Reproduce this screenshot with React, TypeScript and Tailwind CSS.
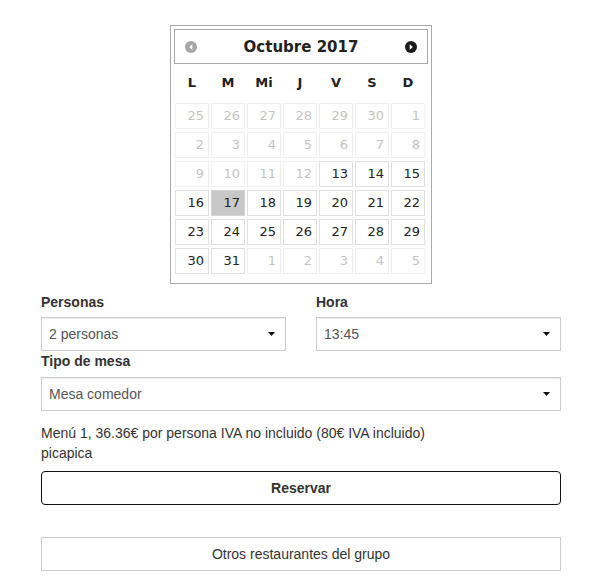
import React from "react";

type Day = { n: number; active: boolean; selected?: boolean };

const rows: Day[][] = (() => {
  const d = (n: number, active = false, selected = false): Day => ({ n, active, selected });
  return [
    [d(25), d(26), d(27), d(28), d(29), d(30), d(1)],
    [d(2), d(3), d(4), d(5), d(6), d(7), d(8)],
    [d(9), d(10), d(11), d(12), d(13, true), d(14, true), d(15, true)],
    [d(16, true), d(17, true, true), d(18, true), d(19, true), d(20, true), d(21, true), d(22, true)],
    [d(23, true), d(24, true), d(25, true), d(26, true), d(27, true), d(28, true), d(29, true)],
    [d(30, true), d(31, true), d(1), d(2), d(3), d(4), d(5)],
  ];
})();

const dayNames = ["L", "M", "Mi", "J", "V", "S", "D"];

function NavIcon({ dir, color }: { dir: "prev" | "next"; color: string }) {
  return (
    <svg width="12" height="12" viewBox="0 0 12 12">
      <circle cx="6" cy="6" r="6" fill={color} />
      {dir === "prev" ? (
        <path d="M7.3 3.2 L4.2 6 L7.3 8.8 Z" fill="#fff" />
      ) : (
        <path d="M4.7 3.2 L7.8 6 L4.7 8.8 Z" fill="#fff" />
      )}
    </svg>
  );
}

function SelectBox({ value }: { value: string }) {
  return (
    <div className="h-[34px] border border-[#ccc] bg-white shadow-[inset_0_1px_1px_rgba(0,0,0,0.075)] flex items-center justify-between pl-[7px] pr-[10px]">
      <span className="text-[14px] text-[#555]">{value}</span>
      <svg width="7" height="4" viewBox="0 0 7 4">
        <path d="M0 0 H7 L3.5 4 Z" fill="#111" />
      </svg>
    </div>
  );
}

export default function App() {
  return (
    <div className="w-[590px] h-[583px] bg-white overflow-hidden" style={{ fontFamily: '"Liberation Sans", Arial, sans-serif' }}>
      <div className="ml-[41px] w-[520px] pt-[25px]">
        {/* Calendar */}
        <div
          className="mx-auto w-[262px] border border-[#aaa] p-[3px] bg-white"
          style={{ fontFamily: '"DejaVu Sans", Verdana, sans-serif' }}
        >
          <div className="h-[35px] border border-[#aaa] flex items-center justify-between px-[10px] pt-[1px]">
            <NavIcon dir="prev" color="#a6a6a6" />
            <span className="text-[15px] font-bold text-[#222]">Octubre 2017</span>
            <NavIcon dir="next" color="#1a1a1a" />
          </div>
          <div className="grid grid-cols-[repeat(7,34px)] gap-x-[2px] pl-[1px] h-[37px] items-center">
            {dayNames.map((n) => (
              <div key={n} className="text-center text-[13px] font-bold text-[#222]">
                {n}
              </div>
            ))}
          </div>
          <div className="grid grid-cols-[repeat(7,34px)] gap-x-[2px] gap-y-[3px] pl-[1px] mt-[2px] mb-[6px]">
            {rows.flat().map((c, i) => (
              <div
                key={i}
                className={
                  "h-[26px] border flex items-center justify-end pr-[4px] text-[13px] " +
                  (c.selected
                    ? "bg-[#c8c8c8] border-[#d3d3d3] text-[#222]"
                    : c.active
                    ? "bg-white border-[#e0e0e0] text-[#222]"
                    : "bg-white border-[#f0f0f0] text-[#c4c4c4]")
                }
              >
                {c.n}
              </div>
            ))}
          </div>
        </div>

        {/* Form */}
        <div className="grid grid-cols-2 gap-x-[30px] mt-[8px]">
          <div>
            <label className="block text-[14px] leading-[20px] font-bold text-[#333] mb-[5px]">Personas</label>
            <SelectBox value="2 personas" />
          </div>
          <div>
            <label className="block text-[14px] leading-[20px] font-bold text-[#333] mb-[5px]">Hora</label>
            <SelectBox value="13:45" />
          </div>
        </div>
        <label className="block text-[14px] leading-[20px] font-bold text-[#333] mb-[6px]">Tipo de mesa</label>
        <SelectBox value="Mesa comedor" />

        <div className="mt-[12px] text-[14px] leading-[20px] text-[#333]">
          <div>Menú 1, 36.36€ por persona IVA no incluido (80€ IVA incluido)</div>
          <div>picapica</div>
        </div>

        <button className="mt-[8px] w-full h-[34px] border border-[#111] rounded-[4px] bg-white text-[14px] font-bold text-[#333] flex items-center justify-center">
          Reservar
        </button>

        <button className="mt-[32px] w-full h-[34px] border border-[#ccc] bg-white text-[14px] text-[#333] flex items-center justify-center">
          Otros restaurantes del grupo
        </button>
      </div>
    </div>
  );
}
